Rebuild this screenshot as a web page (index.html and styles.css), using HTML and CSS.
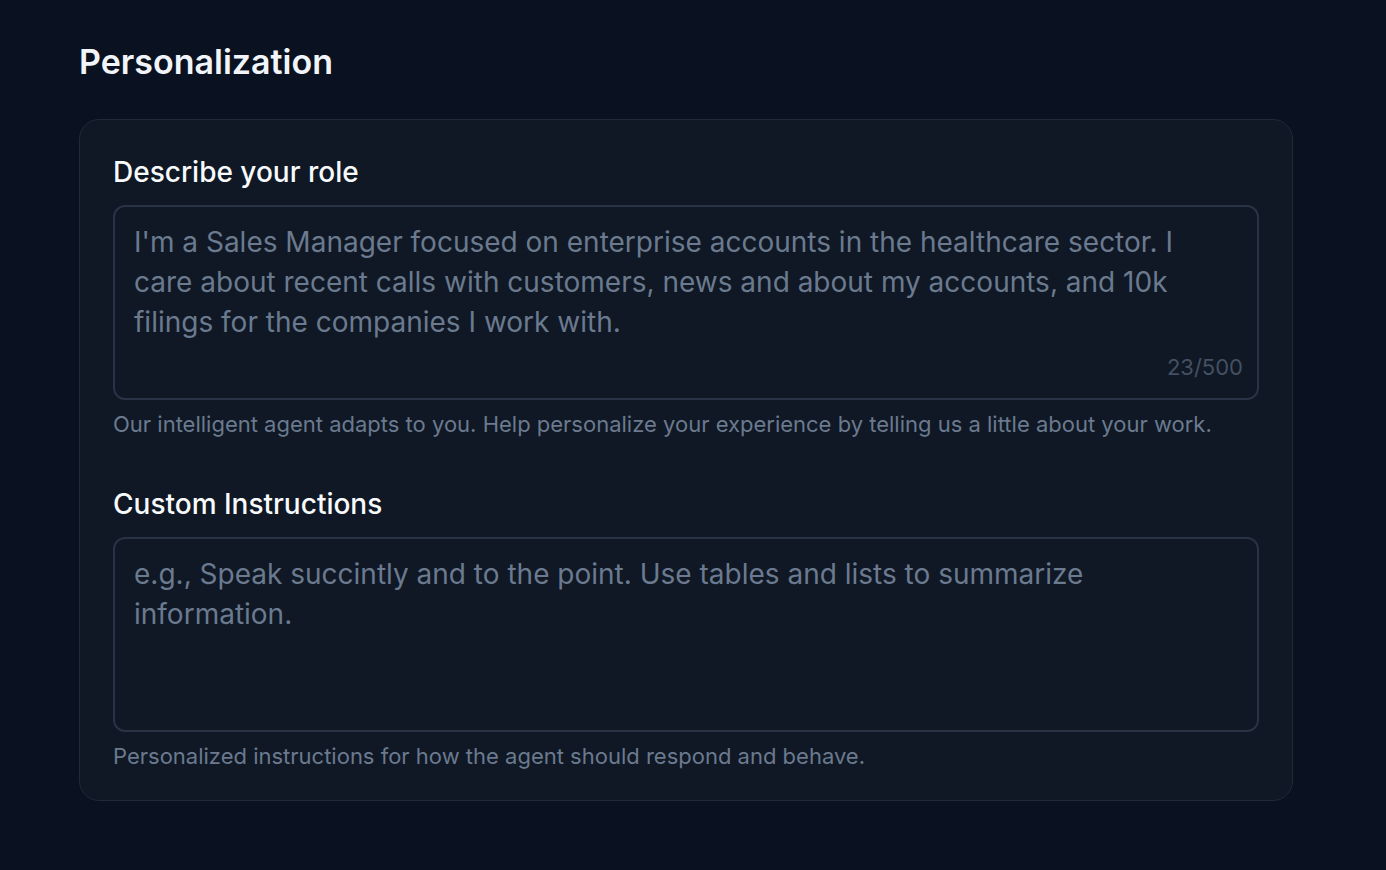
FILE: index.html
```html
<!DOCTYPE html>
<html lang="en">
<head>
<meta charset="utf-8">
<title>Personalization</title>
<link rel="stylesheet" href="styles.css">
</head>
<body>
<main class="page">
  <h1 class="title">Personalization</h1>
  <section class="card">
    <div class="field">
      <label class="label" for="role">Describe your role</label>
      <div class="box">
        <textarea id="role" class="input" placeholder="I'm a Sales Manager focused on enterprise accounts in the healthcare sector. I care about recent calls with customers, news and about my accounts, and 10k filings for the companies I work with."></textarea>
        <span class="counter">23/500</span>
      </div>
      <p class="help">Our intelligent agent adapts to you. Help personalize your experience by telling us a little about your work.</p>
    </div>
    <div class="field">
      <label class="label" for="instr">Custom Instructions</label>
      <div class="box">
        <textarea id="instr" class="input" placeholder="e.g., Speak succintly and to the point. Use tables and lists to summarize information."></textarea>
      </div>
      <p class="help">Personalized instructions for how the agent should respond and behave.</p>
    </div>
  </section>
</main>
</body>
</html>
```

FILE: styles.css
```css
* { box-sizing: border-box; }
html, body {
  margin: 0;
  background: #0a1120;
  height: 100%;
}
body {
  font-family: Inter, "Noto Sans", sans-serif;
  color: #f1f5f9;
}
.page {
  padding: 42px 0 0 79px;
  width: 1293px;
}
.title {
  margin: 0 0 37px;
  font-size: 34px;
  line-height: 40px;
  font-weight: 600;
  color: #f1f5f9;
  letter-spacing: 0;
}
.card {
  background: #0f1824;
  border: 1px solid #1f2a3a;
  border-radius: 20px;
  padding: 32px 33px 29px;
  display: flex;
  flex-direction: column;
  gap: 45px;
}
.field {
  display: flex;
  flex-direction: column;
}
.label {
  font-size: 28px;
  line-height: 40px;
  font-weight: 500;
  color: #f8fafc;
  margin-bottom: 13px;
}
.box {
  position: relative;
  height: 195px;
}
.input {
  display: block;
  width: 100%;
  height: 100%;
  resize: none;
  background: #0f1824;
  border: 2px solid #283445;
  border-radius: 12px;
  padding: 15px 19px;
  font-family: Inter, "Noto Sans", sans-serif;
  font-size: 28px;
  line-height: 40px;
  color: #cbd5e1;
  outline: none;
  overflow: hidden;
}
.input::placeholder {
  color: #6b7a8f;
  opacity: 1;
}
.counter {
  position: absolute;
  right: 16px;
  bottom: 18px;
  font-size: 22px;
  line-height: 30px;
  color: #445063;
}
.help {
  margin: 9px 0 0;
  font-size: 22px;
  line-height: 30px;
  color: #6b7a8f;
}
```
